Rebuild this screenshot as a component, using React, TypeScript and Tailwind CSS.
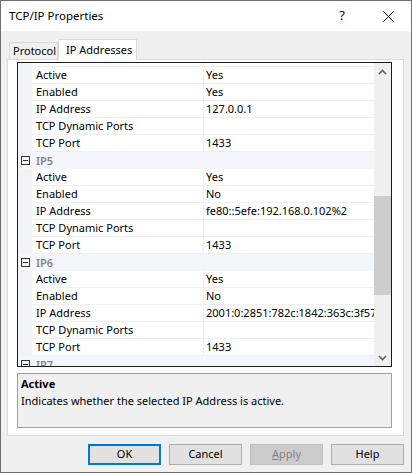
import React from "react";

type Prop = { name: string; value: string };

const props4: Prop[] = [
  { name: "Active", value: "Yes" },
  { name: "Enabled", value: "Yes" },
  { name: "IP Address", value: "127.0.0.1" },
  { name: "TCP Dynamic Ports", value: "" },
  { name: "TCP Port", value: "1433" },
];

const groups: { title: string; items: Prop[] }[] = [
  {
    title: "IP5",
    items: [
      { name: "Active", value: "Yes" },
      { name: "Enabled", value: "No" },
      { name: "IP Address", value: "fe80::5efe:192.168.0.102%2" },
      { name: "TCP Dynamic Ports", value: "" },
      { name: "TCP Port", value: "1433" },
    ],
  },
  {
    title: "IP6",
    items: [
      { name: "Active", value: "Yes" },
      { name: "Enabled", value: "No" },
      { name: "IP Address", value: "2001:0:2851:782c:1842:363c:3f57:fd99" },
      { name: "TCP Dynamic Ports", value: "" },
      { name: "TCP Port", value: "1433" },
    ],
  },
  { title: "IP7", items: [] },
];

const PropRow = ({ item }: { item: Prop }) => (
  <div className="flex h-[17px]">
    <div className="w-[14px] shrink-0 bg-[#f0f4f9]" />
    <div className="w-[171px] shrink-0 border-b border-[#f0f0f0] pl-[4px] leading-[16px] whitespace-nowrap overflow-hidden">
      {item.name}
    </div>
    <div className="w-px shrink-0 bg-[#f0f0f0]" />
    <div className="w-[170px] shrink-0 border-b border-[#f0f0f0] pl-[2px] leading-[16px] whitespace-nowrap overflow-hidden">
      {item.value}
    </div>
  </div>
);

const GroupRow = ({ title }: { title: string }) => (
  <div className="flex h-[17px] items-center bg-[#f3f6fb]">
    <div className="w-[14px] shrink-0 flex justify-center">
      <div className="relative w-[9px] h-[9px] border border-[#333]">
        <div className="absolute left-[1px] top-[3px] w-[5px] h-px bg-[#333]" />
      </div>
    </div>
    <div className="pl-[4px] font-semibold text-[#858585] leading-[16px]">{title}</div>
  </div>
);

const Chevron = ({ down }: { down?: boolean }) => (
  <svg width="9" height="6" viewBox="0 0 9 6" className={down ? "rotate-180" : ""}>
    <path d="M1 5 L4.5 1.5 L8 5" fill="none" stroke="#606060" strokeWidth="1.6" />
  </svg>
);

const Button = ({
  label,
  primary,
  disabled,
}: {
  label: React.ReactNode;
  primary?: boolean;
  disabled?: boolean;
}) => (
  <div
    className={
      "w-[73px] h-[21px] flex items-center justify-center " +
      (primary
        ? "border-2 border-[#0078d7] bg-[#e1e1e1]"
        : disabled
        ? "border border-[#bfbfbf] bg-[#cccccc] text-[#838383]"
        : "border border-[#adadad] bg-[#e1e1e1]")
    }
  >
    {label}
  </div>
);

export default function App() {
  return (
    <div
      className="w-[412px] h-[473px] border border-[#6e6e6e] bg-[#f0f0f0] flex flex-col text-[11px] text-black"
      style={{ fontFamily: '"Noto Sans", "Open Sans", sans-serif' }}
    >
      {/* title bar */}
      <div className="h-[30px] bg-white flex items-center shrink-0">
        <div className="pl-[8px] flex-1 text-[11.5px]">TCP/IP Properties</div>
        <div className="w-[46px] text-center text-[13px]">?</div>
        <div className="w-[46px] flex justify-center">
          <svg width="11" height="11" viewBox="0 0 11 11">
            <path d="M0.5 0.5 L10.5 10.5 M10.5 0.5 L0.5 10.5" stroke="#000" strokeWidth="1" />
          </svg>
        </div>
      </div>

      <div className="px-[6px] pt-[7px] flex flex-col">
        {/* tabs */}
        <div className="flex items-end h-[21px] pl-[2px]">
          <div className="h-[17px] w-[49px] border border-b-0 border-[#d9d9d9] bg-[#f0f0f0] pl-[3px] leading-[16px] whitespace-nowrap">
            Protocol
          </div>
          <div className="relative z-10 -mb-px h-[21px] w-[79px] border border-b-0 border-[#d9d9d9] bg-white pl-[7px] leading-[19px] whitespace-nowrap">
            IP Addresses
          </div>
        </div>

        {/* tab page */}
        <div className="w-[397px] h-[377px] border border-[#d9d9d9] bg-white pl-[9px] pt-[2px]">
          <div className="w-[375px] h-[305px] border border-[#1b1b1b] flex">
            <div className="w-[356px] overflow-hidden">
              <div className="-mt-[13px]">
                <PropRow item={{ name: "", value: "" }} />
                {props4.map((p, i) => (
                  <PropRow key={i} item={p} />
                ))}
                {groups.map((g) => (
                  <div key={g.title}>
                    <GroupRow title={g.title} />
                    {g.items.map((p, i) => (
                      <PropRow key={i} item={p} />
                    ))}
                  </div>
                ))}
              </div>
            </div>
            {/* scroll bar */}
            <div className="w-[17px] bg-[#f0f0f0] flex flex-col">
              <div className="h-[17px] flex items-center justify-center">
                <Chevron />
              </div>
              <div className="flex-1 relative">
                <div className="absolute left-0 right-0 top-[116px] h-[99px] bg-[#cdcdcd]" />
              </div>
              <div className="h-[17px] flex items-center justify-center">
                <Chevron down />
              </div>
            </div>
          </div>

          {/* description */}
          <div className="mt-[6px] w-[375px] h-[55px] border border-[#a0a0a0] bg-[#f0f0f0] px-[3px] pt-[1px] leading-[17px]">
            <div className="font-bold">Active</div>
            <div>Indicates whether the selected IP Address is active.</div>
          </div>
        </div>

        {/* buttons */}
        <div className="flex justify-end gap-[8px] mt-[8px] pr-[1px]">
          <Button label="OK" primary />
          <Button label="Cancel" />
          <Button
            label={
              <span>
                <span className="underline">A</span>pply
              </span>
            }
            disabled
          />
          <Button label="Help" />
        </div>
      </div>
    </div>
  );
}
